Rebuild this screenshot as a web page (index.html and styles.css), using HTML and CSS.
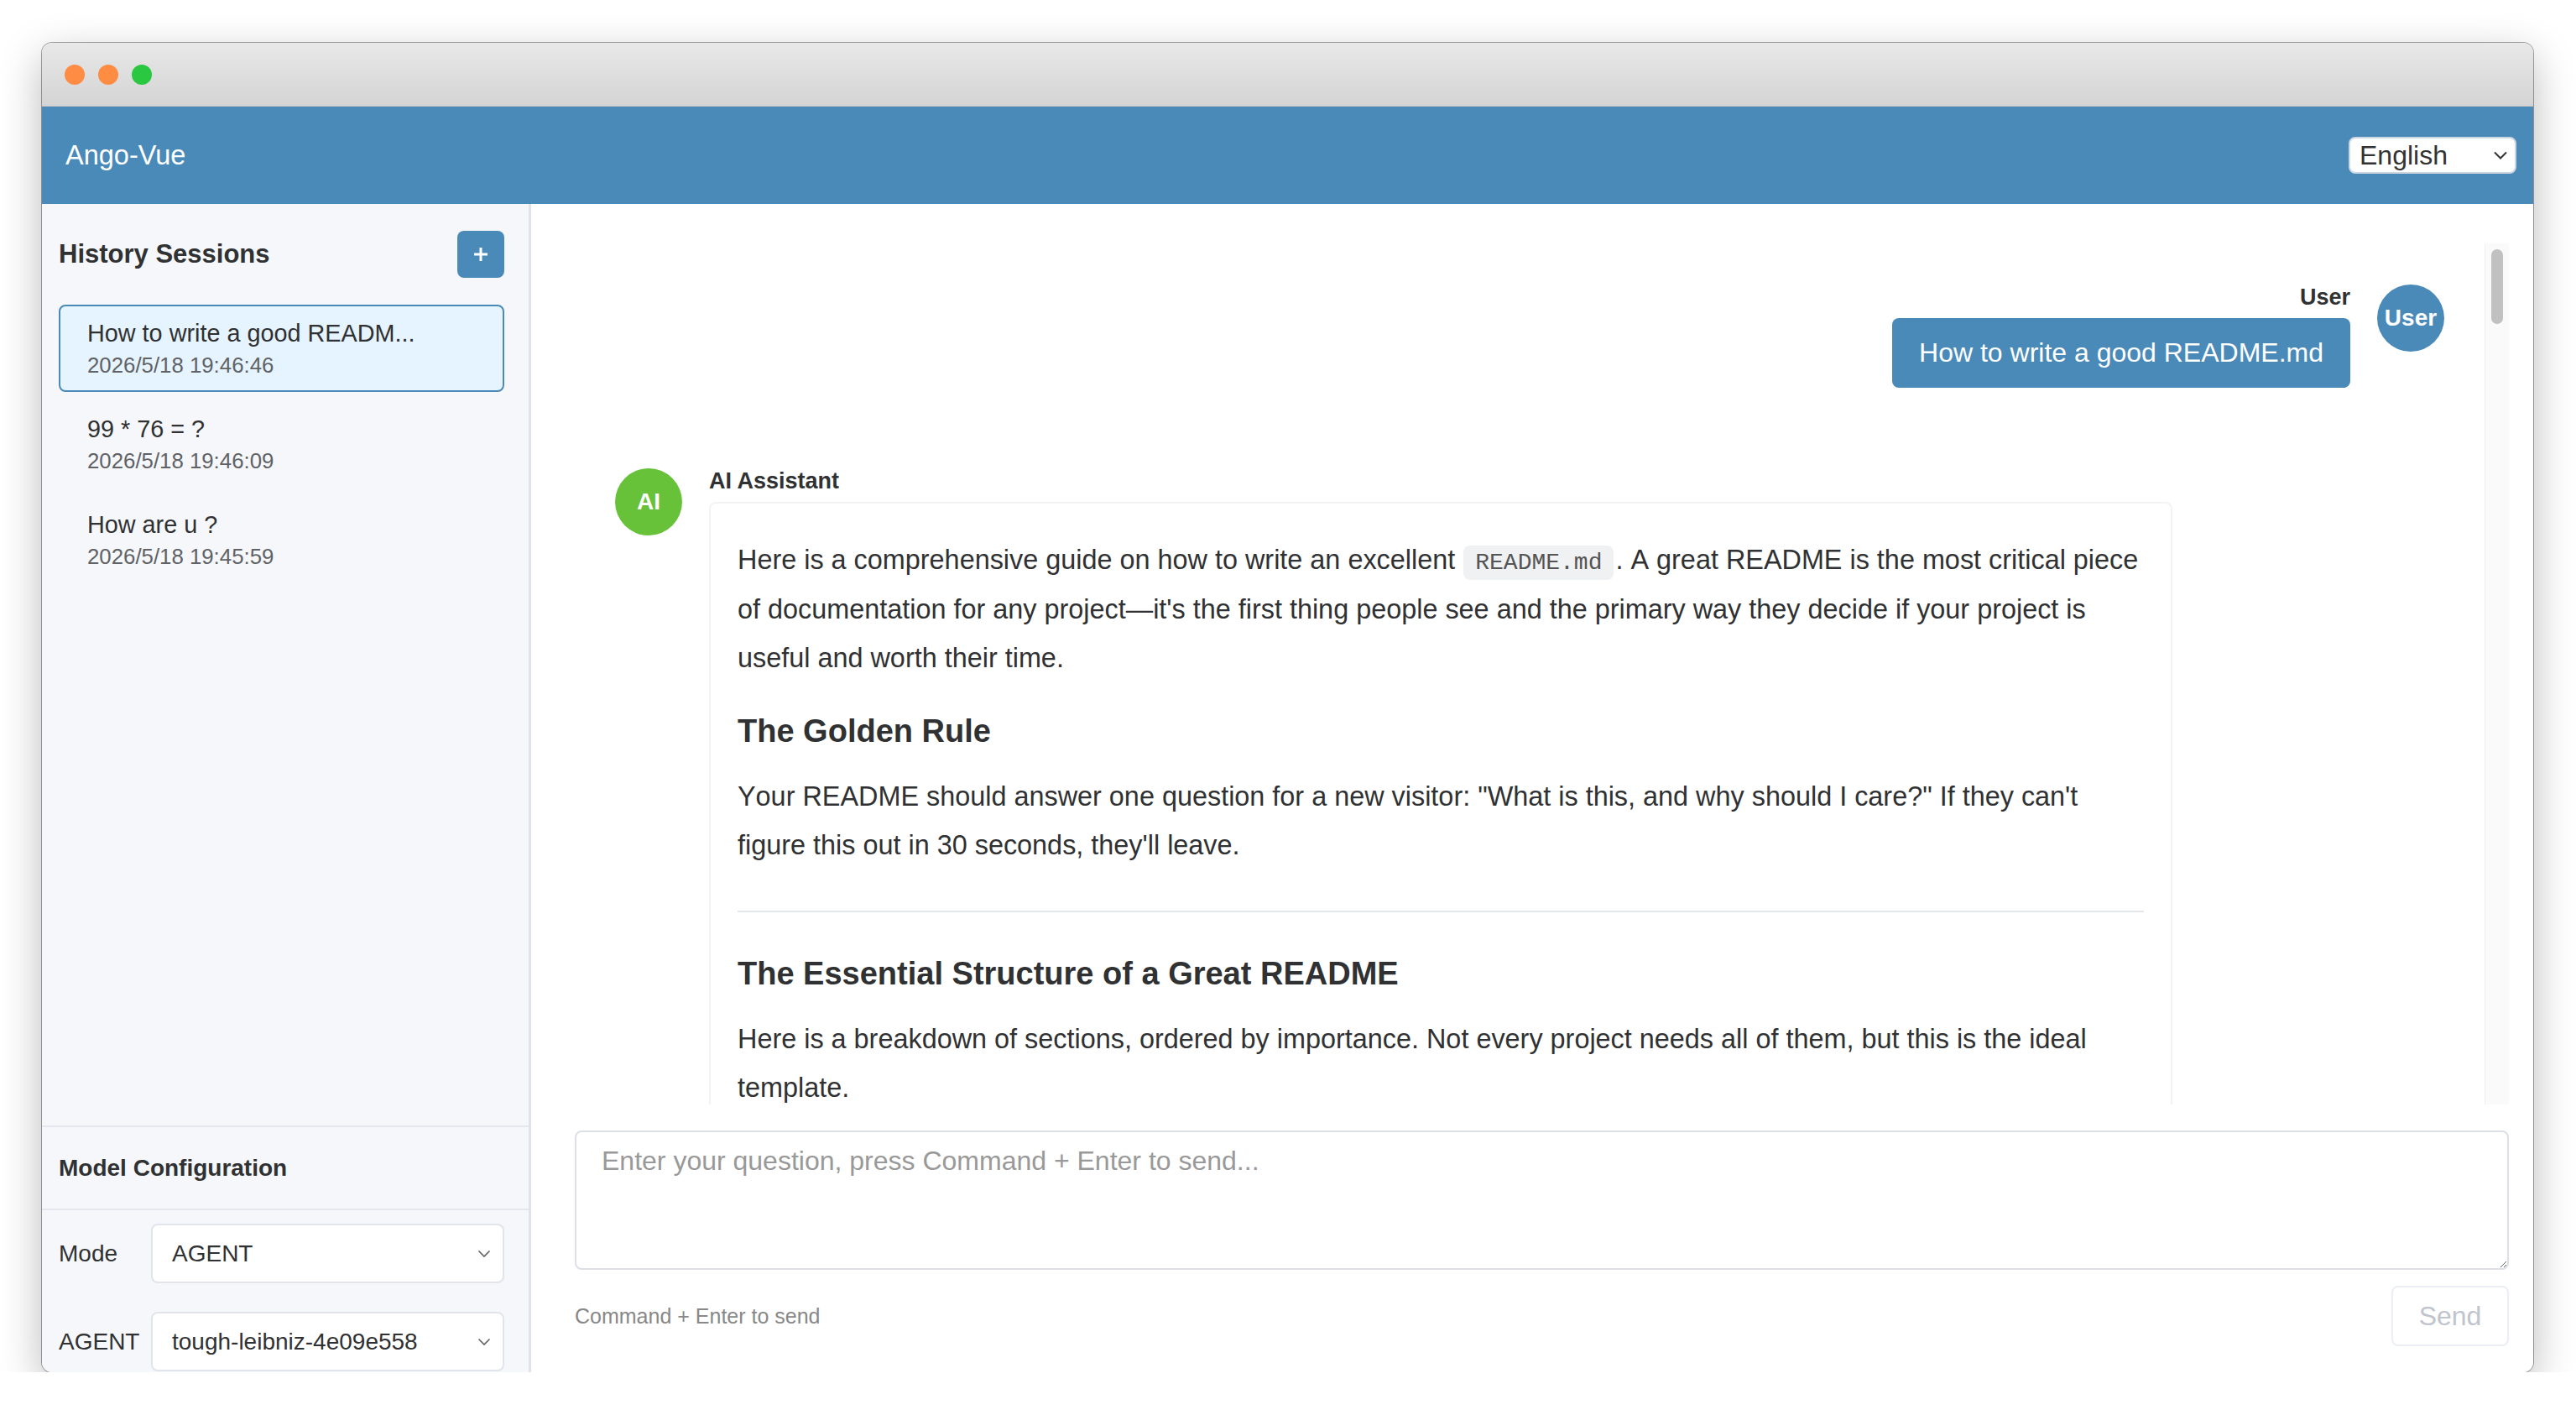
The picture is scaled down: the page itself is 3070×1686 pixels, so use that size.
FILE: index.html
```html
<!DOCTYPE html>
<html lang="en">
<head>
    <meta charset="UTF-8">
    <meta name="viewport" content="width=device-width, initial-scale=1.0">
    <title>Ango-Vue</title>
    <link rel="stylesheet" href="styles.css">
</head>
<body>
    <div class="window">
        <div class="titlebar">
            <span class="light orange"></span>
            <span class="light orange"></span>
            <span class="light green"></span>
        </div>

        <header class="app-header">
            <div class="brand">Ango-Vue</div>
            <div class="lang-select">
                <span>English</span>
                <svg width="16" height="10" viewBox="0 0 16 10"><path d="M1 1.5l7 7 7-7" fill="none" stroke="#333" stroke-width="2"/></svg>
            </div>
        </header>

        <div class="app-body">
            <aside class="sidebar">
                <div class="sessions">
                    <div class="sessions-head">
                        <h2>History Sessions</h2>
                        <button class="new-btn">
                            <svg width="18" height="18" viewBox="0 0 18 18"><path d="M9 1v16M1 9h16" stroke="#fff" stroke-width="3"/></svg>
                        </button>
                    </div>
                    <ul class="session-list">
                        <li class="session active">
                            <div class="session-title">How to write a good READM...</div>
                            <div class="session-date">2026/5/18 19:46:46</div>
                        </li>
                        <li class="session">
                            <div class="session-title">99 * 76 = ?</div>
                            <div class="session-date">2026/5/18 19:46:09</div>
                        </li>
                        <li class="session">
                            <div class="session-title">How are u ?</div>
                            <div class="session-date">2026/5/18 19:45:59</div>
                        </li>
                    </ul>
                </div>

                <div class="config">
                    <div class="config-title">Model Configuration</div>
                    <div class="config-rows">
                        <div class="config-row">
                            <label>Mode</label>
                            <div class="select">
                                <span>AGENT</span>
                                <svg width="16" height="10" viewBox="0 0 16 10"><path d="M1.5 1.5l6.5 6.5 6.5-6.5" fill="none" stroke="#606266" stroke-width="1.6"/></svg>
                            </div>
                        </div>
                        <div class="config-row">
                            <label>AGENT</label>
                            <div class="select">
                                <span>tough-leibniz-4e09e558</span>
                                <svg width="16" height="10" viewBox="0 0 16 10"><path d="M1.5 1.5l6.5 6.5 6.5-6.5" fill="none" stroke="#606266" stroke-width="1.6"/></svg>
                            </div>
                        </div>
                    </div>
                </div>
            </aside>

            <main class="chat">
                <div class="message-list">
                    <div class="messages">
                        <div class="message user">
                            <div class="msg-body">
                                <div class="msg-name">User</div>
                                <div class="bubble">How to write a good README.md</div>
                            </div>
                            <div class="avatar">User</div>
                        </div>

                        <div class="message ai">
                            <div class="avatar">AI</div>
                            <div class="msg-body">
                                <div class="msg-name">AI Assistant</div>
                                <div class="markdown">
                                    <p>Here is a comprehensive guide on how to write an excellent <code>README.md</code>. A great README is the most critical piece of documentation for any project—it's the first thing people see and the primary way they decide if your project is useful and worth their time.</p>
                                    <h3>The Golden Rule</h3>
                                    <p>Your README should answer one question for a new visitor: "What is this, and why should I care?" If they can't figure this out in 30 seconds, they'll leave.</p>
                                    <hr>
                                    <h3>The Essential Structure of a Great README</h3>
                                    <p>Here is a breakdown of sections, ordered by importance. Not every project needs all of them, but this is the ideal template.</p>
                                </div>
                            </div>
                        </div>
                    </div>
                    <div class="scrollbar"><div class="thumb"></div></div>
                </div>

                <div class="composer">
                    <textarea placeholder="Enter your question, press Command + Enter to send..."></textarea>
                    <div class="composer-foot">
                        <span class="hint">Command + Enter to send</span>
                        <button class="send-btn" disabled>Send</button>
                    </div>
                </div>
            </main>
        </div>
    </div>
</body>
</html>
```

FILE: styles.css
```css
html, body{
    margin: 0;
    padding: 0;
    background-color: #fff;
}
body{
    font-family: "Liberation Sans", Arial, sans-serif;
    color: #303133;
}
.window{
    width: 2969px;
    height: 1584px;
    margin: 51px 0 0 50px;
    border-radius: 12px;
    overflow: hidden;
    display: flex;
    flex-direction: column;
    box-shadow: 0 0 0 1px rgba(0,0,0,0.35), 0 16px 50px rgba(0,0,0,0.28);
}

/* 창 상단 */
.titlebar{
    height: 75px;
    flex-shrink: 0;
    display: flex;
    align-items: center;
    gap: 16px;
    padding-left: 27px;
    background: linear-gradient(#e8e8e8, #d4d4d4);
    border-bottom: 1px solid #c4c4c4;
}
.light{
    width: 24px;
    height: 24px;
    border-radius: 50%;
}
.light.orange{
    background-color: #fe8c42;
}
.light.green{
    background-color: #29c840;
}

.app-header{
    height: 116px;
    flex-shrink: 0;
    display: flex;
    align-items: center;
    justify-content: space-between;
    padding: 0 20px 0 28px;
    background-color: #4a8ab9;
}
.brand{
    font-size: 32.5px;
    color: #fff;
}
.lang-select{
    width: 200px;
    height: 44px;
    box-sizing: border-box;
    display: flex;
    align-items: center;
    justify-content: space-between;
    padding: 0 9px 0 11px;
    background-color: #fff;
    border: 2px solid #ccd6e1;
    border-radius: 8px;
    font-size: 32px;
    color: #333;
}

.app-body{
    flex: 1;
    display: flex;
    min-height: 0;
}

/* 왼쪽 */
.sidebar{
    width: 583px;
    flex-shrink: 0;
    box-sizing: border-box;
    display: flex;
    flex-direction: column;
    background-color: #f5f7fa;
    border-right: 3px solid #dfe2e9;
}
.sessions{
    flex: 1;
    min-height: 0;
    overflow: hidden;
    padding: 32px 29px 0 20px;
}
.sessions-head{
    height: 56px;
    display: flex;
    align-items: center;
    justify-content: space-between;
    margin-bottom: 32px;
}
.sessions-head h2{
    margin: 0;
    font-size: 31px;
    font-weight: bold;
    color: #303133;
}
.new-btn{
    width: 56px;
    height: 56px;
    padding: 0;
    border: none;
    border-radius: 8px;
    background-color: #4a8ab9;
    display: flex;
    align-items: center;
    justify-content: center;
}
.session-list{
    list-style: none;
    margin: 0;
    padding: 0;
}
.session{
    padding: 14px 32px;
    margin-bottom: 10px;
    border: 2px solid transparent;
    border-radius: 8px;
}
.session.active{
    border-color: #4a8ab9;
    background-color: #e6f4ff;
}
.session-title{
    font-size: 28.8px;
    line-height: 36px;
    color: #303133;
}
.session-date{
    margin-top: 4px;
    font-size: 25.8px;
    line-height: 32px;
    color: #606266;
}

.config{
    height: 292px;
    flex-shrink: 0;
    overflow: hidden;
    border-top: 2px solid #e4e7ed;
}
.config-title{
    height: 97px;
    display: flex;
    align-items: center;
    padding: 0 20px;
    border-bottom: 2px solid #e4e7ed;
    font-size: 28px;
    font-weight: bold;
}
.config-rows{
    padding: 16px 29px 0 20px;
    display: flex;
    flex-direction: column;
    gap: 34px;
}
.config-row{
    display: flex;
    align-items: center;
}
.config-row label{
    width: 110px;
    flex-shrink: 0;
    font-size: 28px;
    color: #303133;
}
.select{
    flex: 1;
    height: 71px;
    box-sizing: border-box;
    display: flex;
    align-items: center;
    justify-content: space-between;
    padding: 0 14px 0 23px;
    background-color: #fff;
    border: 2px solid #e1e4ea;
    border-radius: 8px;
    font-size: 28px;
    color: #303133;
}

/* 채팅 영역 */
.chat{
    flex: 1;
    min-width: 0;
    display: flex;
    flex-direction: column;
    padding: 47px 29px 31px 52px;
    background-color: #fff;
}
.message-list{
    flex: 1;
    min-height: 0;
    display: flex;
}
.messages{
    flex: 1;
    min-width: 0;
    overflow: hidden;
    padding: 49px 48px 0 48px;
}
.scrollbar{
    width: 28px;
    flex-shrink: 0;
    background-color: #fafafa;
    border-left: 1px solid #efefef;
}
.thumb{
    width: 14px;
    height: 89px;
    margin: 7px auto 0;
    border-radius: 7px;
    background-color: #c1c1c1;
}

.message{
    display: flex;
    gap: 32px;
    margin-bottom: 96px;
}
.message.user{
    justify-content: flex-end;
}
.avatar{
    width: 80px;
    height: 80px;
    flex-shrink: 0;
    border-radius: 50%;
    display: flex;
    align-items: center;
    justify-content: center;
    background-color: #4a8ab9;
    color: #fff;
    font-size: 28px;
    font-weight: bold;
}
.message.ai .avatar{
    background-color: #67c23a;
}
.msg-body{
    max-width: 80%;
    display: flex;
    flex-direction: column;
}
.message.user .msg-body{
    align-items: flex-end;
}
.msg-name{
    font-size: 27px;
    line-height: 30px;
    font-weight: bold;
    color: #303133;
    margin-bottom: 10px;
}
.bubble{
    padding: 20px 32px;
    border-radius: 8px;
    background-color: #4a8ab9;
    color: #fff;
    font-size: 32px;
    line-height: 43px;
}

.markdown{
    padding: 38px 32px 0;
    border: 2px solid #f2f3f5;
    border-radius: 8px;
    background-color: #fff;
    font-size: 32.4px;
    line-height: 58.5px;
    font-kerning: none;
    color: #303133;
}
.markdown p{
    margin: 0 0 32px;
}
.markdown code{
    display: inline-block;
    font-family: "Liberation Mono", "Courier New", monospace;
    font-size: 28px;
    line-height: 33px;
    padding: 4px 14px;
    margin: 0 2px 0 1px;
    border-radius: 8px;
    background-color: #f0f1f3;
    color: #555;
}
.markdown h3{
    margin: 32px 0 24px;
    font-size: 38px;
    line-height: 50px;
    font-weight: bold;
}
.markdown hr{
    height: 2px;
    margin: 48px 0;
    border: none;
    background-color: #e4e7ed;
}

/* 입력 영역 */
.composer{
    flex-shrink: 0;
    margin-top: 31px;
}
.composer textarea{
    display: block;
    width: 100%;
    height: 166px;
    box-sizing: border-box;
    padding: 10px 30px;
    border: 2px solid #dcdfe6;
    border-radius: 8px;
    font-family: "Liberation Sans", Arial, sans-serif;
    font-size: 32px;
    line-height: 48px;
    color: #606266;
    resize: vertical;
    outline: none;
}
.composer textarea::placeholder{
    color: #999;
}
.composer-foot{
    height: 72px;
    margin-top: 19px;
    display: flex;
    align-items: center;
    justify-content: space-between;
}
.hint{
    font-size: 25px;
    color: #888;
}
.send-btn{
    width: 140px;
    height: 72px;
    border: 2px solid #ebeef5;
    border-radius: 8px;
    background-color: #fff;
    color: #c0c4cc;
    font-family: "Liberation Sans", Arial, sans-serif;
    font-size: 32px;
}
```
